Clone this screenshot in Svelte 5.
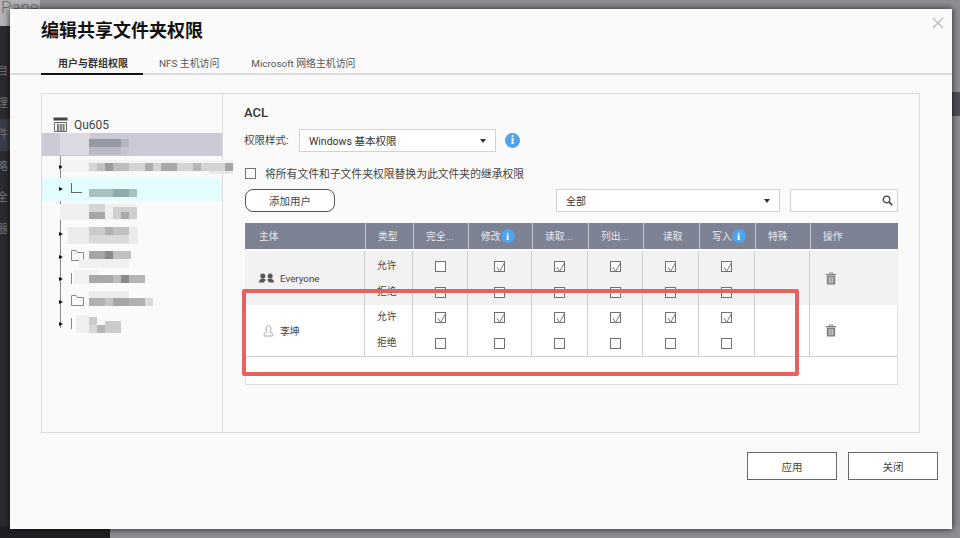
<script>
  const headCols = [120, 48, 55, 64, 56, 55, 56, 56, 55, 87];
  const bodyCols = [119, 48, 55, 64, 56, 55, 56, 56, 55, 88];
  const heads = [
    { t: '主体', c: 'first' }, { t: '类型' }, { t: '完全...' }, { t: '修改', i: true }, { t: '读取...' },
    { t: '列出...' }, { t: '读取', c: 'mid' }, { t: '写入', i: true }, { t: '特殊' }, { t: '操作' }
  ];
  const users = [
    { name: 'Everyone', kind: 'group', allow: [false, true, true, true, true, true], shade: true },
    { name: '李坤', kind: 'user', allow: [true, true, true, true, true, true], shade: false }
  ];
  const nav = [
    { t: '目', h: false }, { t: '理', h: false }, { t: '件', h: true },
    { t: '略', h: false }, { t: '全', h: false }, { t: '器', h: false }
  ];
  const treeRows = [
    { sel: true, arrow: false, folder: '' },
    { arrow: true, folder: '' },
    { cyan: true, arrow: true, folder: 'l' },
    { arrow: false, folder: '' },
    { arrow: true, folder: '' },
    { arrow: true, folder: 'full' },
    { arrow: true, folder: 'left' },
    { arrow: true, folder: 'full' },
    { arrow: true, folder: 'left' }
  ];
  // pixelated mosaic over the tree: x, y, w, h (pane coordinates), colour
  const mosaic = [
    [18, 39, 30, 22, '#dadbe2'], [47, 45, 32, 8, '#9698a4'], [79, 45, 8, 8, '#b5b6c0'], [47, 53, 32, 8, '#b9bac4'], [79, 53, 8, 8, '#c4c5cf'],
    [20, 66, 172, 12, '#f3f3f3'], [47, 69, 144, 8, '#d4d4d4'], [55, 69, 16, 8, '#c0c0c0'], [63, 69, 8, 8, '#9c9c9c'], [71, 69, 16, 8, '#bdbdbd'],
    [103, 69, 8, 8, '#ababab'], [119, 69, 16, 8, '#a8a8a8'], [151, 69, 8, 8, '#b5b5b5'], [183, 69, 8, 8, '#a5a5a5'], [167, 77, 24, 3, '#e8e8e8'],
    [47, 95, 48, 8, '#a9c0c3'], [71, 95, 16, 8, '#8fa8ab'],
    [18, 110, 76, 16, '#efefef'], [47, 110, 16, 8, '#d4d4d4'], [47, 118, 16, 7, '#a5a5a5'], [71, 113, 24, 12, '#cfcfcf'], [79, 118, 8, 7, '#a8a8a8'],
    [26, 133, 70, 17, '#ebebeb'], [47, 133, 16, 8, '#cbcbcb'], [63, 133, 8, 8, '#b0b0b0'], [71, 133, 16, 8, '#c0c0c0'], [47, 141, 40, 8, '#dadada'],
    [47, 157, 16, 8, '#a5a5a5'], [63, 157, 8, 8, '#8a8a8a'], [71, 157, 18, 8, '#c0c0c0'], [37, 165, 50, 9, '#f0f0f0'],
    [32, 176, 24, 14, '#f1f1f1'], [47, 181, 24, 8, '#a8a8a8'], [71, 181, 8, 8, '#bdbdbd'], [79, 181, 8, 8, '#8a8a8a'], [87, 181, 16, 8, '#b5b5b5'],
    [47, 197, 40, 7, '#ebebeb'], [47, 204, 16, 8, '#b0b0b0'], [63, 204, 8, 8, '#c4c4c4'], [71, 204, 16, 8, '#a5a5a5'], [87, 204, 16, 8, '#b0b0b0'], [103, 204, 8, 8, '#dadada'],
    [34, 221, 13, 18, '#efefef'], [47, 223, 8, 8, '#cbcbcb'], [47, 231, 32, 8, '#d8d8d8'], [55, 231, 8, 8, '#b5b5b5'], [63, 227, 16, 12, '#cbcbcb']
  ];
  const track = (list) => list.map((c) => c + 'px').join(' ');
</script>

<div class="page">
  <div class="panel-word">Panel</div>
  <div class="sidebar">
    {#each nav as n}
      <div class="nav" class:on={n.h}>{n.t}</div>
    {/each}
  </div>
  <div class="bottom-dark"></div>
  <div class="right-band"></div>

  <div class="modal">
    <svg class="close" width="12" height="12" viewBox="0 0 12 12"><path d="M1 1l10 10M11 1L1 11" stroke="#b9b9b9" stroke-width="1.200" fill="none"/></svg>
    <h1>编辑共享文件夹权限</h1>
    <div class="tabs">
      <div class="tab active">用户与群组权限</div>
      <div class="tab">NFS 主机访问</div>
      <div class="tab">Microsoft 网络主机访问</div>
    </div>

    <div class="panel">
      <div class="tree">
        <div class="root">
          <svg width="15" height="15" viewBox="0 0 15 15"><path d="M0.500 0.500h14v3h-14z" fill="#444"/><path d="M1.500 5.500h12v9h-12z" fill="none" stroke="#666"/><path d="M4 7h2v7H4zM6.800 7h2v7h-2zM9.600 7h2v7h-2z" fill="#777"/></svg>
          <span>Qu605</span>
        </div>
        <div class="rows">
          <div class="trunk"></div>
          {#each treeRows as r}
            <div class="row" class:sel={r.sel} class:cyan={r.cyan}>
              {#if r.arrow}<i class="arrow"></i>{/if}
              {#if r.folder === 'full'}
                <svg class="fold" width="13" height="11" viewBox="0 0 13 11"><path d="M0.500 0.500h4.500l1.500 2h6v8h-12z" fill="none" stroke="#888"/></svg>
              {:else if r.folder}
                <i class="folder {r.folder}"></i>
              {/if}
            </div>
          {/each}
        </div>
        {#each mosaic as m}
          <div class="tile" style="left:{m[0]}px;top:{m[1]}px;width:{m[2]}px;height:{m[3]}px;background:{m[4]}"></div>
        {/each}
      </div>

      <div class="acl">
        <h2>ACL</h2>
        <div class="style-row">
          <label for="perm">权限样式:</label>
          <div class="select perm" id="perm"><span>Windows 基本权限</span><i class="caret"></i></div>
          <span class="info big">i</span>
        </div>
        <div class="inherit">
          <span class="box"></span>
          <span>将所有文件和子文件夹权限替换为此文件夹的继承权限</span>
        </div>
        <div class="toolbar">
          <button class="add">添加用户</button>
          <div class="select filter"><span>全部</span><i class="caret"></i></div>
          <div class="search">
            <svg width="11" height="11" viewBox="0 0 11 11"><circle cx="4.500" cy="4.500" r="3.300" fill="none" stroke="#444" stroke-width="1.300"/><path d="M7 7l3.200 3.200" stroke="#444" stroke-width="1.700"/></svg>
          </div>
        </div>

        <div class="table">
          <div class="grid head" style="grid-template-columns:{track(headCols)}">
            {#each heads as h}
              <div class="th {h.c || ''}">{h.t}{#if h.i}<span class="info small">i</span>{/if}</div>
            {/each}
          </div>
          {#each users as u}
            <div class="grid user" class:shade={u.shade} style="grid-template-columns:{track(bodyCols)}">
              <div class="td who">
                {#if u.kind === 'group'}
                  <svg width="15" height="11" viewBox="0 0 15 11"><circle cx="3.800" cy="3" r="2.500" fill="#555"/><circle cx="11.200" cy="3" r="2.500" fill="#555"/><path d="M0 9.500c0-2.800 2-4 3.800-4s3.700 1.200 3.700 4zM7.500 9.500c0-2.800 2-4 3.700-4s3.800 1.200 3.800 4z" fill="#555"/><path d="M5 11c0-2.500 1-4 2.500-4s2.500 1.500 2.500 4z" fill="#f2f2f3"/></svg>
                {:else}
                  <svg class="person" width="11" height="12" viewBox="0 0 11 12"><path d="M5.500 1C7.200 1 8 2.300 8 3.900c0 1.300-.5 2.300-1.100 3 .2.800 2.700 1.100 3.100 2.400.2.700-.1 1.700-.8 1.700H1.800c-.7 0-1-1-.8-1.700.4-1.300 2.900-1.600 3.100-2.400C3.500 6.200 3 5.200 3 3.900 3 2.300 3.800 1 5.500 1z" fill="none" stroke="#a0a0a0" stroke-width="1"/></svg>
                {/if}
                <span>{u.name}</span>
              </div>
              <div class="td kinds"><span>允许</span><span>拒绝</span></div>
              {#each u.allow as a}
                <div class="td checks">
                  <span class="box" class:checked={a}>
                    {#if a}<svg width="13" height="13" viewBox="0 0 13 13"><path d="M3 6.200l2.600 4.300L10.500 1.500" fill="none" stroke="#777" stroke-width="1"/></svg>{/if}
                  </span>
                  <span class="box"></span>
                </div>
              {/each}
              <div class="td"></div>
              <div class="td del">
                <svg width="12" height="13" viewBox="0 0 12 13"><path d="M4 2V.6h4V2M.8 2h10.400v1.300H.800zM1.800 3.800h8.400v8.700H1.800z" fill="#7f7f7f"/><path d="M4.200 5v6.200M6 5v6.200M7.800 5v6.200" stroke="#efefef" stroke-width=".8"/><path d="M4.800 1.300h2.400v.7H4.800z" fill="#f2f2f3"/></svg>
              </div>
            </div>
          {/each}
        </div>
      </div>
    </div>

    <div class="foot">
      <button class="btn">应用</button>
      <button class="btn">关闭</button>
    </div>
  </div>

  <div class="callout"></div>
</div>

<style>
  :global(body) {
    margin: 0;
    background: #8d8d92;
  }
  .page {
    position: relative;
    width: 960px;
    height: 538px;
    overflow: hidden;
    font-family: Roboto, "Noto Sans CJK SC", sans-serif;
    color: #333;
  }
  .panel-word {
    position: absolute;
    left: 0;
    top: -4px;
    width: 41px;
    height: 30px;
    padding-left: 1px;
    box-sizing: border-box;
    background: #b4b4b6;
    color: #6e6e71;
    font-size: 17px;
    font-weight: 300;
    line-height: 22px;
    overflow: hidden;
    border-right: 1px solid #8f8f93;
  }
  .sidebar {
    position: absolute;
    left: 0;
    top: 26px;
    bottom: 0;
    width: 40px;
    padding-top: 30px;
    box-sizing: border-box;
    background: #2a2b31;
  }
  .nav {
    height: 31.500px;
    line-height: 31.500px;
    font-size: 11px;
    color: #77787d;
    text-indent: -3px;
    overflow: hidden;
  }
  .nav.on {
    background: #3a3e4b;
  }
  .bottom-dark {
    position: absolute;
    left: 0;
    bottom: 0;
    width: 110px;
    height: 12px;
    background: #1f2025;
  }
  .right-band {
    position: absolute;
    right: 0;
    top: 92px;
    width: 12px;
    height: 24px;
    background: #4d4e5a;
    box-shadow: 0 26px 0 -11.500px #77777c;
  }
  .modal {
    position: absolute;
    left: 10px;
    top: 9px;
    width: 942px;
    height: 520px;
    background: #fafafa;
    box-shadow: 0 0 7px rgba(0, 0, 0, 0.75);
  }
  .close {
    position: absolute;
    right: 8px;
    top: 8px;
  }
  h1 {
    margin: 0;
    padding: 10px 0 0 31px;
    font-size: 18px;
    line-height: 24px;
    font-weight: 700;
    color: #111;
  }
  .tabs {
    display: flex;
    margin-top: 13px;
    padding-left: 31px;
    height: 17px;
    border-bottom: 2px solid #dedede;
    font-size: 9.900px;
    line-height: 15px;
    color: #555;
  }
  .tab {
    padding: 0 16px;
    white-space: nowrap;
  }
  .tab.active {
    padding: 0 15px 0 17px;
    height: 17px;
    box-sizing: content-box;
    border-bottom: 2px solid #111;
    font-size: 10px;
    font-weight: 700;
    color: #333;
  }
  .panel {
    display: flex;
    margin: 18px 32px 0 31px;
    height: 340px;
    border: 1px solid #dcdcdc;
    box-sizing: border-box;
  }
  .tree {
    position: relative;
    width: 180px;
    flex: none;
    border-right: 1px solid #dcdcdc;
  }
  .root {
    display: flex;
    align-items: center;
    gap: 6px;
    height: 18px;
    margin-top: 21px;
    padding-left: 11px;
    font-size: 12px;
    color: #444;
  }
  .root span {
    padding-top: 1px;
  }
  .rows {
    position: relative;
  }
  .trunk {
    position: absolute;
    left: 18px;
    top: 2px;
    bottom: 8px;
    width: 1px;
    background: #888;
  }
  .row {
    position: relative;
    height: 22.500px;
  }
  .row.sel {
    background: #c9cad5;
  }
  .row.cyan {
    background: #e3fcfd;
  }
  .arrow {
    position: absolute;
    left: 17px;
    top: 9px;
    border-left: 4px solid #111;
    border-top: 2.500px solid transparent;
    border-bottom: 2.500px solid transparent;
  }
  .fold {
    position: absolute;
    left: 29px;
    top: 4px;
  }
  .folder {
    position: absolute;
    left: 29px;
    top: 5px;
    width: 11px;
    height: 10px;
    border: 1px solid #888;
    box-sizing: border-box;
  }
  .folder.l {
    border-top: 0;
    border-right: 0;
    border-color: #666;
  }
  .folder.left {
    border-top: 0;
    border-right: 0;
    border-bottom: 0;
    height: 11px;
  }
  .tile {
    position: absolute;
    filter: blur(0.5px);
  }
  .acl {
    flex: 1;
    padding: 11px 0 0 21px;
    min-width: 0;
  }
  h2 {
    margin: 0;
    font-size: 13px;
    line-height: 16px;
    font-weight: 500;
    color: #333;
  }
  .style-row {
    display: flex;
    align-items: center;
    margin-top: 8px;
    font-size: 10.500px;
    color: #444;
  }
  .style-row label {
    width: 55px;
    flex: none;
    margin-top: -3px;
  }
  .select {
    display: flex;
    align-items: center;
    justify-content: space-between;
    height: 23px;
    box-sizing: border-box;
    background: #fff;
    border: 1px solid #d2d2d2;
    padding: 0 9px;
    color: #333;
    flex: none;
  }
  .perm {
    width: 197px;
    font-size: 10.500px;
  }
  .caret {
    border-top: 4px solid #333;
    border-left: 3.500px solid transparent;
    border-right: 3.500px solid transparent;
  }
  .info {
    display: inline-flex;
    align-items: center;
    justify-content: center;
    border-radius: 50%;
    background: #4ea3ea;
    color: #fff;
    font-weight: 700;
    font-family: "Liberation Serif", serif;
  }
  .info.big {
    width: 15px;
    height: 15px;
    margin-left: 9px;
    font-size: 12px;
  }
  .info.small {
    width: 14px;
    height: 14px;
    font-size: 11px;
    margin-left: 0;
    flex: none;
  }
  .inherit {
    display: flex;
    align-items: center;
    gap: 9px;
    margin-top: 14px;
    padding-left: 1px;
    height: 14px;
    font-size: 10.800px;
    color: #444;
  }
  .toolbar {
    display: flex;
    align-items: stretch;
    margin-top: 9px;
    height: 23px;
    padding-left: 1px;
  }
  .add {
    width: 90px;
    padding: 0;
    background: #fff;
    border: 1px solid #555;
    border-radius: 8px;
    font: inherit;
    font-size: 10.500px;
    color: #444;
  }
  .filter {
    width: 224px;
    margin-left: 221px;
    font-size: 10px;
  }
  .search {
    display: flex;
    align-items: center;
    justify-content: flex-end;
    width: 108px;
    margin-left: 10px;
    padding-right: 4px;
    box-sizing: border-box;
    background: #fff;
    border: 1px solid #d2d2d2;
  }
  .table {
    margin: 11px 0 0 1px;
    width: 653px;
    height: 162px;
    box-sizing: border-box;
    background: #fff;
    border-right: 1px solid #e0e0e0;
    border-left: 1px solid #e0e0e0;
    border-bottom: 1px solid #ddd;
  }
  .grid {
    display: grid;
    margin-right: -1px;
    margin-left: -1px;
  }
  .head {
    height: 26px;
    background: #7c8193;
    margin-bottom: 2px;
  }
  .th {
    display: flex;
    align-items: center;
    padding-left: 12px;
    font-size: 9.800px;
    color: #e8e9ee;
    border-left: 1px solid #c4c6d0;
    white-space: nowrap;
  }
  .th.first {
    border-left: 0;
    padding-left: 14px;
  }
  .th.mid {
    padding-left: 19px;
  }
  .user {
    height: 52px;
    box-sizing: border-box;
    border-bottom: 1px solid #cfcfcf;
  }
  .user.shade {
    height: 54px;
    background: #f2f2f3;
    border-bottom: 0;
  }
  .td {
    display: flex;
    border-left: 1px solid #cdcdcd;
    min-width: 0;
  }
  .td:first-child {
    border-left: 0;
  }
  .who {
    align-items: center;
    gap: 6px;
    padding-left: 14px;
    font-size: 9.800px;
    color: #444;
  }
  .who .person {
    margin: 0 0 0 4px;
  }
  .kinds {
    flex-direction: column;
    gap: 10px;
    padding: 4px 0 0 12px;
    font-size: 9.800px;
    line-height: 16px;
    color: #444;
  }
  .shade .kinds {
    padding-top: 7px;
  }
  .checks {
    flex-direction: column;
    align-items: center;
    gap: 15px;
    padding-top: 7px;
  }
  .shade .checks {
    padding-top: 10px;
  }
  .box {
    position: relative;
    display: block;
    width: 11px;
    height: 11px;
    flex: none;
    box-sizing: border-box;
    border: 1px solid #707070;
    background: #fff;
  }
  .box svg {
    position: absolute;
    left: -1px;
    top: -1px;
  }
  .del {
    align-items: center;
    padding-left: 15px;
  }
  .foot {
    display: flex;
    justify-content: flex-end;
    gap: 11px;
    margin: 19px 14px 0 0;
  }
  .btn {
    width: 90px;
    height: 28px;
    padding: 0;
    background: #fff;
    border: 1px solid #666;
    font: inherit;
    font-size: 10.500px;
    color: #444;
  }
  .callout {
    position: absolute;
    left: 242px;
    top: 289px;
    width: 557px;
    height: 87px;
    box-sizing: border-box;
    border: 4px solid #e8615f;
    border-radius: 2px;
  }
</style>
